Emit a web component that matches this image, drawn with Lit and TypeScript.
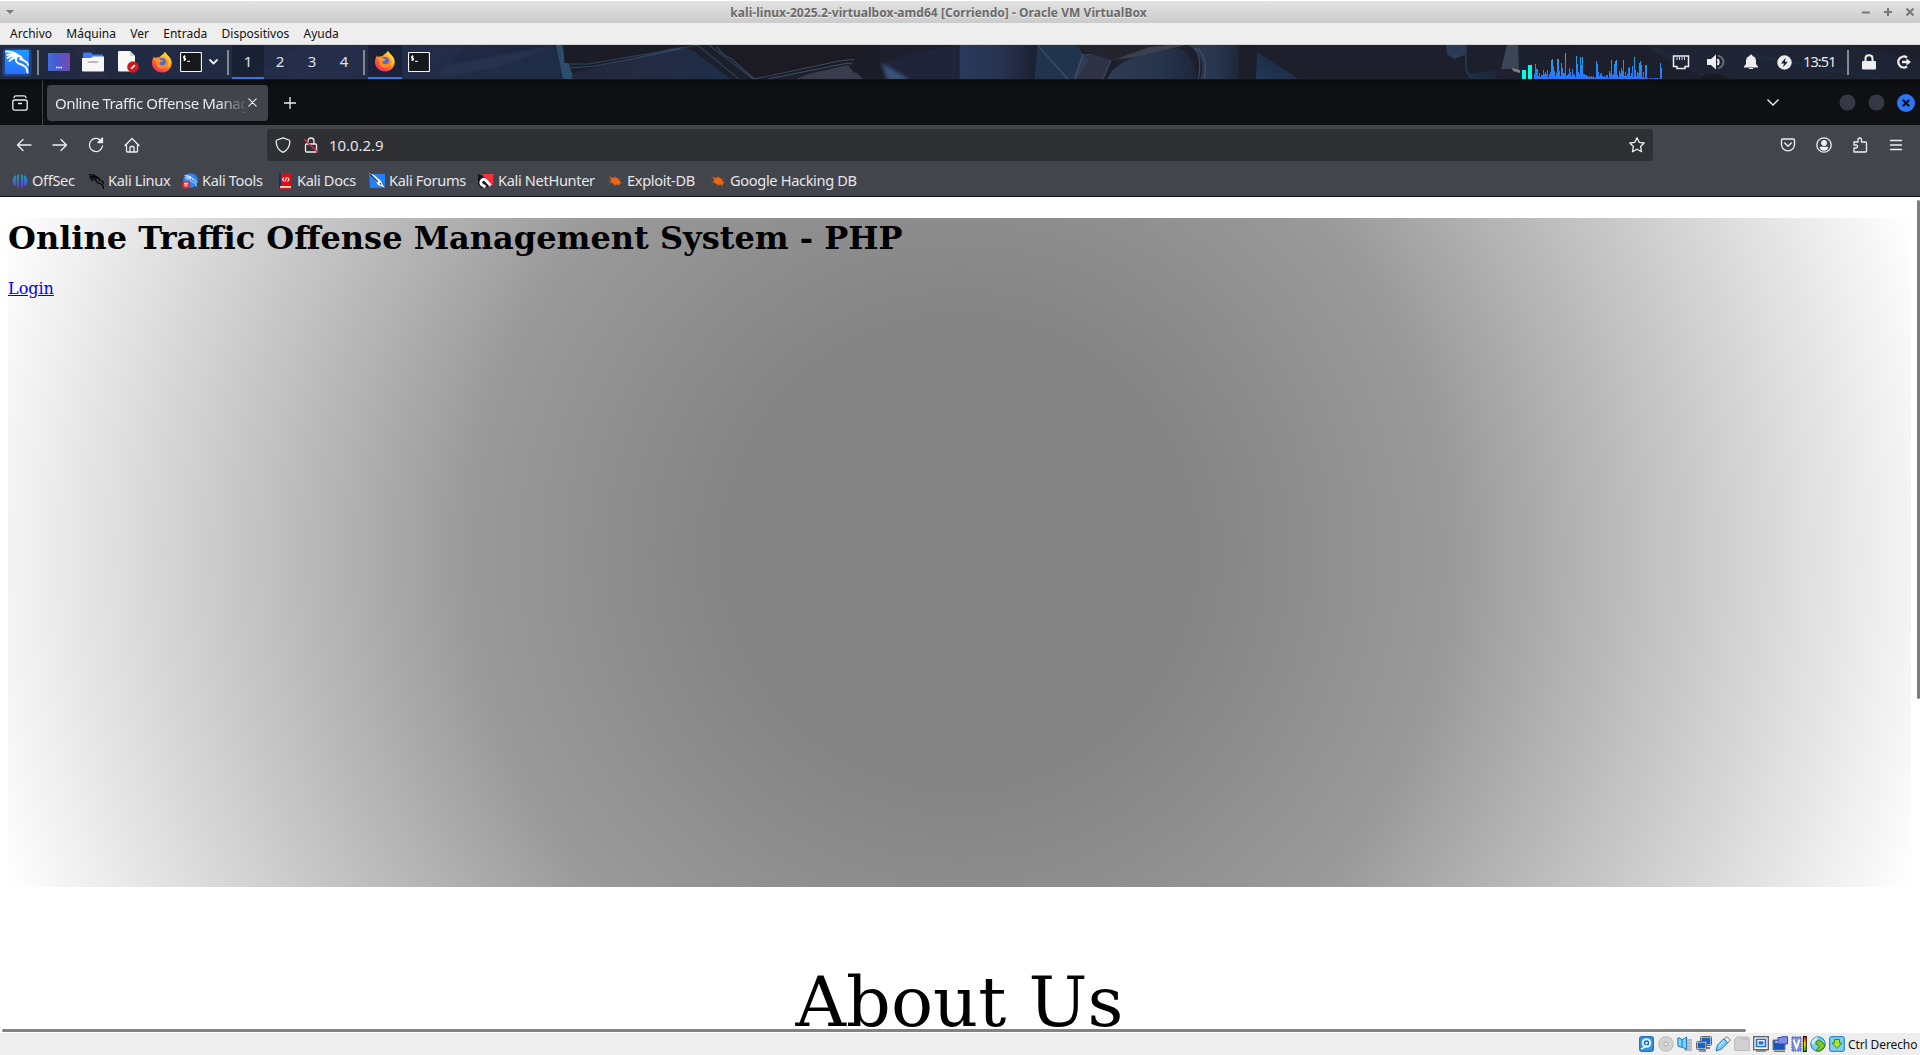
import { LitElement, html, css, svg } from "lit";
import { customElement } from "lit/decorators.js";

const stroke = (w: number, h: number, body: unknown) => html`<svg class="line" width=${w} height=${h} viewBox="0 0 ${w} ${h}">${body}</svg>`;
const pic = (w: number, h: number, body: unknown) => html`<svg width=${w} height=${h} viewBox="0 0 ${w} ${h}">${body}</svg>`;

const dragon = svg`
  <path d="M2 2.500Q9 2.500 13.500 6Q8 4.500 3 5.800M3.500 9Q7 6 13 6.500M5.500 12Q8 8.500 13 8M13 6Q17 7 18.500 10.500M12.500 8Q10.500 12.500 14.500 14.500Q18 15.500 21 17.500Q23.500 19.500 23.500 23.500M16 10Q20 11 23 13.500L24 16"
    fill="none" stroke="currentColor" stroke-width="1.900" stroke-linecap="round" stroke-linejoin="round"/>`;

const kaliLogo = pic(33, 34, svg`
  <rect x="2.500" y="3.500" width="29" height="28" rx="4" fill="#2777ff" opacity=".35"/>
  <rect x="5" y="5" width="24" height="24" rx="1" fill="url(#kl)"/>
  <defs><linearGradient id="kl" x1="0" y1="0" x2="0" y2="1"><stop offset="0" stop-color="#1f9bff"/><stop offset="1" stop-color="#2a6cff"/></linearGradient></defs>
  <g transform="translate(4 4)" color="#fff">${dragon}</g>`);

const firefox = pic(22, 22, svg`
  <defs>
    <linearGradient id="ff" x1=".8" y1="0" x2=".2" y2="1"><stop offset="0" stop-color="#ffe14a"/><stop offset=".4" stop-color="#ff9a26"/><stop offset=".75" stop-color="#ff4a3d"/><stop offset="1" stop-color="#e5257f"/></linearGradient>
  </defs>
  <path d="M14 1C15.500 3 16.500 4 17 5C18 5 20 7.500 20.700 10.500C21.500 16 17.500 21.500 11.500 21.500C5 21.500 .8 17 1 11.500C1.200 9 2.300 6.300 3 5.500L4 7C5.500 6 7 6 8 6.500C9.500 4.500 12 3.500 14 1Z" fill="url(#ff)"/>
  <circle cx="11" cy="12" r="4.900" fill="#4a6be0"/>
  <path d="M2.500 8.500C5 6.500 8 7.500 9.500 9L12 9.500C11.500 11 9 11 8.800 12C9 14 12 14.500 14 13C15.500 11 15 9 13.500 7.500C16 8 18 11 16.500 14.500C14.500 18.500 8.500 18.800 6 15.500C4.800 13.500 5 11 5.500 10Z" fill="#ff8a24"/>
  <circle cx="11.500" cy="11.300" r="3" fill="#4a6be0"/><path d="M4 8Q7.500 6.500 9.500 9L12 9.500Q11.500 11 9 11L7 12Z" fill="#ff9a2a"/>
  <path d="M14 1C13 4 15 6 16.500 8C18.500 11 18 15 15.500 17C19 15.500 20.500 11 19 7.500C18 5 15 3.500 14 1Z" fill="#ffd23c"/>`);

const terminal = pic(22, 20, svg`
  <rect x=".5" y=".5" width="21" height="19" rx="1" fill="#171819" stroke="#f4f4f4" stroke-width="1.200"/>
  <path d="M5.500 4.300H3.600V6.200H5.500V8.100H3.300M4.500 3.400V9M7 9.300H10" fill="none" stroke="#fff" stroke-width="1"/>`);

const desktopIcon = pic(22, 18, svg`
  <defs><linearGradient id="dk"><stop offset="0" stop-color="#3f6fe0"/><stop offset=".45" stop-color="#4c58c8"/><stop offset="1" stop-color="#7a48b4"/></linearGradient></defs>
  <rect width="22" height="18" rx="1" fill="url(#dk)"/><path d="M8 14.500h1.500M10.300 14.500h1.500M12.600 14.500h1.500" stroke="#fff" stroke-width="1.500"/>`);

const folderIcon = pic(22, 20, svg`
  <path d="M1 1.500Q1 .5 2 .5H9L11 2.500H20Q21 2.500 21 3.500V9H1Z" fill="#3f7bf0"/>
  <path d="M0 6H9L11 4.500H22V18.500Q22 19.500 21 19.500H1Q0 19.500 0 18.500Z" fill="#f6f6f6"/><path d="M6.500 10H15.500" stroke="#b9b9bd" stroke-width="2" stroke-linecap="round"/>`);

const docIcon = pic(21, 22, svg`
  <path d="M1 0H12L17 5V20.500H1Q0 20.500 0 19.500V1Q0 0 1 0Z" fill="#f8f8f8"/><path d="M12 0L17 5H12Z" fill="#cfcfcf"/>
  <circle cx="15" cy="16" r="5.800" fill="#d2191c"/><path d="M12.700 18.300L13.200 16.600L16.300 13.500L17.500 14.700L14.400 17.800Z" fill="#fff"/>`);

const chevron = stroke(9, 8, svg`<path d="M1 2L4.500 5.500L8 2" stroke-width="1.800"/>`);

const cpu = [5, 15, 10, 10, 3, 6, 2, 4, 4, 9, 5, 7, 5, 9, 2, 5, 7, 19, 20, 13, 8, 3, 6, 20, 20, 8, 3, 16, 11, 6, 6, 26, 3, 4, 5, 11, 7, 3, 10, 5, 4, 2, 23, 15, 7, 5, 22, 14, 22, 5, 5, 4, 4, 3, 2, 3, 2, 3, 2, 3, 1, 2, 18, 15, 7, 3, 5, 6, 3, 2, 3, 2, 4, 4, 1, 8, 6, 19, 4, 5, 15, 18, 19, 4, 2, 8, 6, 11, 8, 19, 3, 7, 3, 5, 11, 12, 3, 6, 13, 2, 22, 9, 3, 7, 6, 16, 18, 14, 2, 7, 1, 14, 14, 1, 0, 1, 1, 0, 1, 0, 1, 1, 1, 1, 0, 1, 16, 11];
const monitor = pic(140, 34, svg`
  <defs><linearGradient id="cg" gradientUnits="userSpaceOnUse" x1="0" y1="34" x2="0" y2="8"><stop offset="0" stop-color="#2a70ff"/><stop offset="1" stop-color="#16b4dc"/></linearGradient></defs>
  <rect x="0" y="25" width="4" height="9" fill="#00ffe0"/><rect x="6" y="20" width="4" height="14" fill="#00ffe0"/>
  ${cpu.map((h, i) => svg`<rect x=${12 + i} y=${34 - h} width="1" height=${h} fill="url(#cg)"/>`)}`);

const wallpaper = svg`
  <defs>
    <linearGradient id="wa"><stop offset="0" stop-color="#20293f"/><stop offset=".6" stop-color="#222c46"/><stop offset="1" stop-color="#1d2740"/></linearGradient>
    <linearGradient id="wb" x1="0" y1="0" x2="1" y2=".1"><stop offset="0" stop-color="#20263a"/><stop offset=".5" stop-color="#242b42"/><stop offset="1" stop-color="#1e2d48"/></linearGradient>
    <linearGradient id="wc"><stop offset="0" stop-color="#283a5c"/><stop offset=".5" stop-color="#293350"/><stop offset="1" stop-color="#1b2032"/></linearGradient>
    <linearGradient id="wd"><stop offset="0" stop-color="#313b52"/><stop offset=".6" stop-color="#26344d"/><stop offset="1" stop-color="#1e2538"/></linearGradient>
    <linearGradient id="we"><stop offset="0" stop-color="#1d3049"/><stop offset=".3" stop-color="#1d2132"/><stop offset="1" stop-color="#1b1d28"/></linearGradient>
    <linearGradient id="wf" x1="0" y1="1" x2="1" y2="0"><stop offset="0" stop-color="#20385a"/><stop offset="1" stop-color="#1d2538"/></linearGradient>
    <filter id="soft"><feGaussianBlur stdDeviation="1.500"/></filter>
  </defs>
  <rect width="1920" height="35" fill="#1d202c"/>
  <rect width="565" height="35" fill="url(#wa)"/>
  <g filter="url(#soft)">
    <path d="M70 0L85 20L78 35H110L95 0Z" fill="#2b2c44" opacity=".6"/>
    <path d="M300 0L250 35H440L465 0Z" fill="#28324e" opacity=".4"/>
  </g>
  <g transform="translate(440) scale(1.4157 1) translate(-440)">
    <g filter="url(#soft)">
      <path d="M430 26Q485 8 526 0V35H430Z" fill="#1f2b45" opacity=".9"/>
      <path d="M440 22Q470 12 520 2L480 22L440 32Z" fill="#2c3552" opacity=".7"/>
    </g>
    <path d="M522 0L527 35H535L526 0Z" fill="#2c4d6c"/>
    <path d="M527 0H620L590 10L545 20L528 18Z" fill="#1b1c25"/>
    <path d="M533 32Q534 27 540 26L604 3Q612 1 618 5L646 35H534Z" fill="url(#wb)"/>
    <path d="M528 19L545 19L622 0M531 23L550 21L610 4M622 0L652 35M630 0L662 35" stroke="#3c6080" stroke-width=".8" fill="none" opacity=".6"/>
    <path d="M636 0H738L736 15L664 34L648 16Z" fill="#1c1b24"/>
    <path d="M636 2Q638 9 646 14L662 34L722 16L736 14L740 0M672 34L728 18L740 22" stroke="#54708a" stroke-width=".8" fill="none" opacity=".6"/>
    <path d="M700 29L728 20L732 27L748 35H690Z" fill="#474c5e" opacity=".65"/>
    <path d="M738 0H752L750 18L760 35H740L730 22Z" fill="#1a1c28"/>
    <path d="M752 18Q775 6 806 0V35H756Z" fill="#20243a"/>
    <g filter="url(#soft)"><path d="M752 18L772 35H756Z" fill="#37547a"/></g>
    <path d="M807 0H862L860 35H807Z" fill="url(#wc)"/>
    <path d="M862 0H890L898 17L888 35H860Z" fill="#22334e"/>
    <path d="M862 0L884 35M894 10L905 9L914 15L908 35H888Z" fill="#41475e" stroke="#52708f" opacity=".5"/>
    <path d="M888 0H970L950 5L920 18L900 9Z" fill="#24242f"/>
  </g>
  <path d="M1112 26Q1130 8 1178 3Q1192 6 1198 35H1106Z" fill="url(#wd)"/>
  <path d="M1116 14L1150 2L1170 0H1186L1130 13Z" fill="#4d5464" opacity=".6"/>
  <path d="M1192 0H1240V35H1200Q1208 12 1188 0Z" fill="url(#wd)"/>
  <path d="M1195 3Q1203 15 1198 35M1198 3Q1209 15 1204 35" stroke="#50627c" fill="none" opacity=".7"/>
  <path d="M1240 0H1257V35H1238Z" fill="#1b1d29"/><path d="M1257 7L1300 35H1256Z" fill="url(#wf)"/>
  <path d="M1446 0H1467V9L1454 14L1447 9Z" fill="#2b3d56"/><path d="M1466 0V25L1472 35" stroke="#22374c" stroke-width="2" fill="none"/>
  <path d="M1470 29L1502 24L1507 0H1580L1548 35H1470Z" fill="url(#we)"/>
  <path d="M1507 0H1518L1519 24L1501 24Z" fill="#3c4558"/><path d="M1512 23L1520 25V28L1513 26Z" fill="#847e7b"/>
  <g filter="url(#soft)">
    <path d="M1645 0L1715 30L1740 35H1920V16L1850 0Z" fill="#1c2435" opacity=".6"/>
    <path d="M1650 2L1706 31M1750 10L1830 25L1880 32" stroke="#233a5e" stroke-width="2" fill="none" opacity=".5"/>
  </g>
  <ellipse cx="1713" cy="33" rx="12" ry="4" fill="#181a22"/>`;

const offsec = svg`<defs><linearGradient id="os" x1="0" y1="0" x2="0" y2="1"><stop offset="0" stop-color="#16a9b8"/><stop offset=".6" stop-color="#3c63cf"/><stop offset="1" stop-color="#6b37d6"/></linearGradient></defs>
  <path d="M7 1V15.500Q4.800 14 4.800 11V4Q4.800 2 7 1ZM9 1V15.500Q11.200 14 11.200 11V4Q11.200 2 9 1ZM4 2V13.500Q.5 11.500 .5 8Q.5 4 4 2ZM12 2V13.500Q15.500 11.500 15.500 8Q15.500 4 12 2Z" fill="url(#os)"/>`;
const bug = svg`<path d="M2.500 4L6 5L7.500 4L10 5L12 6.500L13 8.500L14.500 10L13 10.500L12.500 12.500L10 11.500L8 12.500L6 10.500L3.500 9.500L4 7Z" fill="#f0650f"/>
  <path d="M1 8.500H4M8 2.500L9 5M12 6L15 5M1.500 12L5 9.500M6 13L8 11M.8 2.500L4 4.500M12 13L11 11" stroke="#9a5630" stroke-width=".7"/>`;
const marks: [string, unknown][] = [
  ["OffSec", offsec],
  ["Kali Linux", svg`<g color="#050507" transform="scale(.66)">${dragon}</g>`],
  ["Kali Tools", svg`<circle cx="8.500" cy="7.500" r="7.300" fill="#2b82fb"/><g color="#cfe4ff" transform="translate(2 1) scale(.52)">${dragon}</g><circle cx="4" cy="11.700" r="3.900" fill="#e2282e"/><path d="M2 10.300H6M3.200 10.300V13.500M5 10.300V13.500" stroke="#fff" fill="none"/>`],
  ["Kali Docs", svg`<path d="M3 0H14V13H3Z" fill="#d90d14"/><path d="M2 0H4V15H2Z" fill="#202a66"/><path d="M3 13H14V15.500H3Z" fill="#e6d8cf"/><path d="M3 15.300H14" stroke="#d90d14"/><path d="M7 4.500L5.500 6.500L7 8.500M10.500 4.500L12 6.500L10.500 8.500M9.500 4.500L8 8.500" stroke="#fff" fill="none" stroke-width="1.100"/>`],
  ["Kali Forums", svg`<path d="M0 1H16V13L12 15H1Z" fill="#2380fb"/><path d="M0 0L5 2L12 8L13.500 11.500L16 15L12 13L9 12L6.500 7.500Z" fill="#fff"/><path d="M1 1L9 9M11 10L12 11.500" stroke="#222b3d" stroke-width="1.200"/>`],
  ["Kali NetHunter", svg`<path d="M4 1H15.500L15 12L11 14Z" fill="#f4303c"/><path d="M0 1L5 3L12 11L10 14L3 15L0 11Z" fill="#15161b"/><path d="M12.500 12.500L8 7.500Q5.500 5 3.500 7.500Q1.500 10.500 5 12.500L7.500 14" fill="none" stroke="#fff" stroke-width="2.800"/>`],
  ["Exploit-DB", bug],
  ["Google Hacking DB", bug],
];

const statusIcons = [
  svg`<rect x=".7" y=".7" width="13.600" height="14.600" rx="1.500" fill="#3a93e0" stroke="#0a5cab"/><circle cx="7.500" cy="7" r="4.800" fill="#d9f0ff"/><circle cx="7.500" cy="7" r="2" fill="none" stroke="#1263b8" stroke-width="1.300"/><path d="M8 9Q5 12 2 13" stroke="#eef9ff" stroke-width="1.500" fill="none"/>`,
  svg`<circle cx="8" cy="8" r="7.200" fill="#d2d2d2" stroke="#b8b8b8"/><circle cx="8" cy="8" r="2" fill="#eee" stroke="#aaa"/>`,
  svg`<path d="M10 3H15V15H7Z" fill="#b7b7b7"/><path d="M10 6H15M10 9H15M10 12H15" stroke="#ccc"/><path d="M.8 2H3L5 4L9.500 1V13.500L5 11H3L1 10Z" fill="#7fd3fb" stroke="#1578c0"/><path d="M5 4V11" stroke="#1578c0"/>`,
  svg`<rect x="5" y="1" width="10" height="8" fill="#1b62c4" stroke="#fff"/><rect x="4.500" y=".5" width="11" height="9" rx="1" fill="none" stroke="#666"/><path d="M8 12H14" stroke="#777" stroke-width="2"/><rect x="1" y="6" width="9" height="7" fill="#1b62c4" stroke="#fff"/><rect x=".5" y="5.500" width="10" height="8" rx="1" fill="none" stroke="#666"/><path d="M3 15H10" stroke="#777" stroke-width="1.500"/>`,
  svg`<path d="M9 3L12 .6L15.300 4L12.500 7Z" fill="#ededed" stroke="#777"/><path d="M1 15L2.500 9L8.500 3Q11 4 12.500 7L6.500 13Z" fill="#83cbf7" stroke="#1c75bb"/><path d="M4 10L9 5" stroke="#b5e2ff" stroke-width="1.500"/>`,
  svg`<path d="M.7 3.500L3 1H14L15.300 3V14.500H.7Z" fill="#d0d0d0" stroke="#bcbcbc"/><path d="M7 3H15" stroke="#b1b1b1"/>`,
  svg`<rect x=".7" y=".7" width="14.600" height="13" fill="#f8f8f8" stroke="#666" stroke-width="1.400"/><rect x="2.700" y="2.700" width="10.600" height="8.600" fill="#1b70d0"/><rect x="5" y="4.700" width="6" height="4.500" fill="none" stroke="#fff" stroke-width="1.200"/><path d="M3 15H13" stroke="#777" stroke-width="1.500"/>`,
  svg`<path d="M1 4H13V14H1Z" fill="#1558b8" stroke="#777"/><path d="M2 15.500H13" stroke="#777"/><path d="M6 1.500H9L10 .7H15.500V8H6Z" fill="#7f8ceb" stroke="#3c47b2"/><path d="M3 6H6" stroke="#fff"/>`,
  svg`<path d="M1 1H10V15H1Z" fill="#7f8fe0" stroke="#3346a0" stroke-dasharray="1.500 1"/><path d="M2.500 3.500L5.500 12L8.500 3.500" fill="none" stroke="#fff" stroke-width="2"/><defs><linearGradient id="hb" x1="0" y1="0" x2="0" y2="1"><stop offset="0" stop-color="#f20d0d"/><stop offset=".5" stop-color="#ffe000"/><stop offset="1" stop-color="#1ab81a"/></linearGradient></defs><rect x="12.300" y=".5" width="3" height="15" fill="url(#hb)" stroke="#111"/>`,
  svg`<circle cx="8" cy="8" r="7.200" fill="#7fcaf1" stroke="#1b75bd"/><path d="M1 6Q4 1 8 1Q7 5 3 9Z" fill="#c8edff"/><path d="M6 5.500L9.500 4L14.500 8.500V11L9.500 15.300L6 14.500L9.500 10.500L6 8Z" fill="#75cb24" stroke="#397f12"/>`,
  svg`<rect x=".7" y=".7" width="14.600" height="14.600" rx="1.500" fill="#7fcdf5" stroke="#1876bb"/><path d="M5.500 3.500H10.500V7H13L8 12.500L3 7H5.500Z" fill="#a3e52f" stroke="#3f8a10"/>`,
];

@customElement("app-root")
export class AppRoot extends LitElement {
  static styles = css`
    :host { display: block; width: 1920px; height: 1055px; overflow: hidden; background: #fff; font-family: "Noto Sans", sans-serif; }
    * { box-sizing: border-box; }
    svg { display: block; flex: none; }
    .line { fill: none; stroke: #eeeef0; stroke-width: 1.3; stroke-linecap: round; stroke-linejoin: round; }
    .root { display: flex; flex-direction: column; height: 1055px; }
    .title { height: 23px; flex: none; border-top: 1px solid #fff; background: linear-gradient(#e3e3e3, #cbcbcb); display: grid; grid-template-columns: 1fr auto 1fr; align-items: center; color: #6a6a6a; padding-left: 5px; padding-right: 5px; }
    .title b { font-size: 12px; line-height: 24px; height: 22px; letter-spacing: .04px; text-shadow: 0 1px 0 #eee; white-space: nowrap; margin-left: -43px; }
    .wm { display: flex; justify-content: flex-end; gap: 12px; }
    .menu { height: 22px; flex: none; background: #eee; border-bottom: 1px solid #d4d4d4; display: flex; gap: 14.3px; padding-left: 10px; font-size: 12px; line-height: 21px; color: #111; }
    .panel { height: 35px; flex: none; position: relative; overflow: hidden; display: flex; border-bottom: 1px solid #12151c; }
    .wall { position: absolute; inset: 0; }
    .front { position: relative; display: flex; flex: 1; align-items: stretch; color: #eee; }
    .cell { display: flex; align-items: center; justify-content: center; }
    .w33 { width: 33px; } .w34 { width: 34px; } .w36 { width: 36px; } .w31 { width: 31px; } .w28 { width: 28px; } .w17 { width: 17px; } .w38 { width: 38px; } .w32 { width: 32px; } .w29 { width: 29px; }
    .sep { width: 2px; height: 25px; margin: 5px 3px 0 4px; background: #84888e; }
    .sep.b { margin-left: 5px; } .sep.c { margin-left: 3px; } .sep.d { margin-left: 10px; margin-right: 1px; }
    .ws { width: 32px; text-align: center; font-size: 15px; line-height: 33px; color: #dfe2e8; }
    .on { border-bottom: 2px solid #2a76f5; background: rgba(20, 24, 38, .5); }
    .grow { flex: 1; }
    .clock { width: 38px; padding-left: 4px; font-size: 14.500px; line-height: 33px; letter-spacing: -.9px; white-space: nowrap; color: #e8eaee; }
    .tabs { height: 45px; flex: none; background: linear-gradient(#0b0c0f, #0e1013 6px); display: flex; align-items: center; }
    .recent { width: 43px; height: 45px; border-right: 1px solid #3c3e43; padding-right: 2px; display: flex; align-items: center; justify-content: center; margin-right: 4px; }
    .tab { width: 221px; height: 36px; border-radius: 4px; background: #42444b; display: flex; align-items: center; padding: 0 11px 0 8px; font-size: 15px; color: #e8e8eb; margin-right: 16px; }
    .label { width: 193px; flex: none; white-space: nowrap; letter-spacing: -.42px; mask-image: linear-gradient(90deg, #000 163px, transparent 193px); }
    .ctl { display: flex; align-items: center; gap: 12px; padding-right: 4px; }
    .max { margin-right: -1px; }
    .nav { height: 40px; flex: none; background: #43454c; display: flex; align-items: center; }
    .btns { width: 267px; display: flex; padding-left: 6px; }
    .url { width: 1386px; height: 32px; border-radius: 4px; background: #2f3034; display: flex; align-items: center; padding: 0 8px; color: #e4e4e8; font-size: 15px; }
    .addr { margin-left: 10px; letter-spacing: -.05px; flex: 1; }
    .lock { margin-left: 12px; }
    .tools { flex: 1; display: flex; justify-content: flex-end; padding-right: 6px; }
    .marks { height: 32px; flex: none; background: #43454c; border-bottom: 1px solid #111216; display: grid; grid-template-columns: 76px 94px 95px 92px 109px 129px 103px 160px; padding-left: 12px; color: #e6e6ea; font-size: 14.600px; }
    .mark { display: flex; align-items: center; gap: 4px; white-space: nowrap; letter-spacing: -.34px; line-height: 31px; }
    .page { flex: 1; position: relative; overflow: hidden; padding: 21px 9px 0 8px; font-family: "DejaVu Serif", serif; color: #000; }
    .hero { height: 669px; padding-top: 1px; background: radial-gradient(circle, rgba(0, 0, 0, .485) 22%, rgba(0, 0, 0, .395) 49%, rgba(0, 0, 0, 0) 100%); }
    h1 { margin: 0; font-size: 32px; line-height: 38px; }
    .login { margin-top: 21px; font-size: 16px; line-height: 22px; }
    .login a { color: #0000ee; text-decoration: underline; }
    .about { text-align: center; font-size: 70px; line-height: 72px; margin-top: 79px; white-space: nowrap; }
    .vbar { position: absolute; right: 0; top: 3px; width: 3px; height: 499px; background: #7c7d7e; border-radius: 2px; }
    .hbar { position: absolute; left: 2px; bottom: 1px; width: 1744px; height: 3px; background: #7f8482; border-radius: 2px; }
    .status { height: 22px; flex: none; background: #eee; display: flex; align-items: center; justify-content: flex-end; gap: 3px; padding-right: 1px; font-size: 12px; color: #111; }
    .host { width: 71px; white-space: nowrap; letter-spacing: -.1px; }
  `;

  render() {
    return html`<div class="root">
      <div class="title">
        ${pic(10, 6, svg`<path d="M1 1H9L5 5Z" fill="#777"/>`)}
        <b>kali-linux-2025.2-virtualbox-amd64 [Corriendo] - Oracle VM VirtualBox</b>
        <div class="wm">
          ${pic(10, 10, svg`<path d="M1 5.500H9" stroke="#777" stroke-width="2"/>`)}
          ${pic(10, 10, svg`<path d="M1 5H9M5 1V9" stroke="#777" stroke-width="2"/>`)}
          ${pic(10, 10, svg`<path d="M1.500 1.500L8.500 8.500M8.500 1.500L1.500 8.500" stroke="#777" stroke-width="2"/>`)}
        </div>
      </div>
      <div class="menu">${["Archivo", "Máquina", "Ver", "Entrada", "Dispositivos", "Ayuda"].map((t) => html`<span>${t}</span>`)}</div>
      <div class="panel">
        <svg class="wall" width="1920" height="35" viewBox="0 0 1920 35">${wallpaper}</svg>
        <div class="front">
          <div class="cell w33">${kaliLogo}</div><i class="sep"></i>
          <div class="cell w34">${desktopIcon}</div><div class="cell w34">${folderIcon}</div><div class="cell w36">${docIcon}</div>
          <div class="cell w31">${firefox}</div><div class="cell w28">${terminal}</div><div class="cell w17">${chevron}</div>
          <i class="sep b"></i>
          ${[1, 2, 3, 4].map((n) => html`<div class="ws ${n === 1 ? "on" : ""}">${n}</div>`)}
          <i class="sep c"></i>
          <div class="cell w34 on">${firefox}</div><div class="cell w34">${terminal}</div>
          <div class="grow"></div>
          ${monitor}
          <div class="cell w38">${pic(18, 16, svg`<path d="M1.500 2H16.500V12.500H13V14.500H5V12.500H1.500Z" fill="none" stroke="#eee" stroke-width="1.500"/><path d="M5 3V6M7.500 3V6M10 3V6M12.500 3V6" stroke="#ddd"/>`)}</div>
          <div class="cell w32">${pic(18, 16, svg`<path d="M0 5H4L9 .5V15.500L4 11H0Z" fill="#eee"/><path d="M10.500 5Q12.800 8 10.500 11" fill="none" stroke="#eee" stroke-width="2"/><path d="M11 1.500Q16.500 3.500 16.500 8Q16.500 12.500 11 14.500" fill="none" stroke="#70757d" stroke-width="1.700"/>`)}</div>
          <div class="cell w38">${pic(14, 16, svg`<path d="M7 .5Q8.500 .5 8.500 2Q12 3 12 7V10L14 12.500V13.500H0V12.500L2 10V7Q2 3 5.500 2Q5.500 .5 7 .5Z" fill="#eee"/><path d="M5 14.500H9" stroke="#eee"/>`)}</div>
          <div class="cell w29">${pic(15, 15, svg`<circle cx="7.500" cy="7.500" r="7.200" fill="#eee"/><path d="M8.500 2.800L4 8.500H7L6 12.300L11 6.800H8Z" fill="#1c2230"/>`)}</div>
          <div class="clock">13:51</div><i class="sep d"></i>
          <div class="cell w38">${pic(14, 16, svg`<path d="M3.500 7.500V4.500Q3.500 1.300 7 1.300Q10.500 1.300 10.500 4.500V7.500" stroke="#eee" stroke-width="2" fill="none"/><rect y="7" width="14" height="8.500" rx="1" fill="#eee"/>`)}</div>
          <div class="cell w32">${pic(14, 14, svg`<path d="M10 2.500A5.500 5.500 0 1 0 10 11.500" fill="none" stroke="#eee" stroke-width="2.300"/><path d="M5 7H10" stroke="#eee" stroke-width="2.400"/><path d="M9.500 3.500L14 7L9.500 10.500Z" fill="#eee"/>`)}</div>
        </div>
      </div>
      <div class="tabs">
        <div class="recent">${stroke(16, 16, svg`<rect x=".8" y="5" width="14.400" height="10.200" rx="2"/><path d="M2 2.500Q2.300 .8 4 .8H12Q13.700 .8 14 2.500M6.500 8.500H9.500"/>`)}</div>
        <div class="tab"><span class="label">Online Traffic Offense Manag</span>${stroke(9, 9, svg`<path d="M.8 .8L8.200 8.200M8.200 .8L.8 8.200" stroke-width="1.100"/>`)}</div>
        ${stroke(12, 12, svg`<path d="M6 .5V11.500M.5 6H11.500"/>`)}
        <div class="grow"></div>
        <div class="ctl">
          ${pic(67, 10, svg`<path d="M7.500 1.500L13 7L18.500 1.500" fill="none" stroke="#f2f2f4" stroke-width="1.400"/>`)}
          ${pic(17, 17, svg`<circle cx="8.500" cy="8.500" r="8" fill="#353946"/>`)}
          <span class="max">${pic(17, 17, svg`<circle cx="8.500" cy="8.500" r="8" fill="#353946"/>`)}</span>
          ${pic(20, 20, svg`<circle cx="10" cy="10" r="9" fill="#2a76f5"/><path d="M6.800 6.800L13.200 13.200M13.200 6.800L6.800 13.200" stroke="#0b1120" stroke-width="2.200"/>`)}
        </div>
      </div>
      <div class="nav">
        <div class="btns">
          <div class="cell w36">${stroke(16, 16, svg`<path d="M15 8H1.500M7 2.500L1.500 8L7 13.500"/>`)}</div>
          <div class="cell w36">${stroke(16, 16, svg`<path d="M1 8H14.500M9 2.500L14.500 8L9 13.500"/>`)}</div>
          <div class="cell w36">${stroke(16, 16, svg`<path d="M14.500 9A6.600 6.600 0 1 1 12.500 3.200L14.500 5"/><path d="M14.500 1V5.500H10Z" fill="#f2f2f4"/>`)}</div>
          <div class="cell w36">${stroke(16, 16, svg`<path d="M1 8.500L8 1.500L15 8.500M2.500 7.500V14Q2.500 15 3.500 15H12.500Q13.500 15 13.500 14V7.500M6 15V10.500Q6 9.500 7 9.500H9Q10 9.500 10 10.500V15"/>`)}</div>
        </div>
        <div class="url">
          ${stroke(16, 16, svg`<path d="M8 .8L14 3Q14.800 3.300 14.800 4Q15 12 8 15.300Q1 12 1.200 4Q1.200 3.300 2 3Z"/>`)}
          <span class="lock">${stroke(16, 16, svg`<path d="M5 7V4.500Q5 1 8 1Q11 1 11 4.500V7M3.500 7H12.500Q13.500 7 13.500 8V14Q13.500 15 12.500 15H3.500Q2.500 15 2.500 14V8Q2.500 7 3.500 7Z"/><path d="M1.500 2.500L14.500 15" stroke="#e22850" stroke-width="1.500"/>`)}</span>
          <span class="addr">10.0.2.9</span>
          ${stroke(16, 16, svg`<path d="M8 .8L10.200 5.300L15.200 6L11.600 9.500L12.500 14.700L8 12.200L3.500 14.700L4.400 9.500L.8 6L5.800 5.300Z"/>`)}
        </div>
        <div class="tools">
          <div class="cell w36">${stroke(16, 16, svg`<path d="M2.500 2H13.500Q14.500 2 14.500 3V7.500A6.500 6.300 0 0 1 1.500 7.500V3Q1.500 2 2.500 2ZM4.700 6L8 9.300L11.300 6"/>`)}</div>
          <div class="cell w36">${stroke(16, 16, svg`<circle cx="8" cy="8" r="7.200"/><circle cx="8" cy="6" r="2.300" fill="#f2f2f4"/><path d="M4.300 10.500H11.700Q11 13 8 13Q5 13 4.300 10.500Z" fill="#f2f2f4"/>`)}</div>
          <div class="cell w36">${stroke(16, 16, svg`<path d="M2 15V11H4Q5.500 11 5.500 9.500Q5.500 8 4 8H2V5H6V3Q6 1 7.800 1Q9.500 1 9.500 3V5H13.500Q14.500 5 14.500 6V14Q14.500 15 13.500 15Z"/>`)}</div>
          <div class="cell w36">${stroke(14, 14, svg`<path d="M1.500 2.500H12.500M1.500 7H12.500M1.500 11.500H12.500"/>`)}</div>
        </div>
      </div>
      <div class="marks">${marks.map(([t, icon]) => html`<div class="mark">${pic(16, 16, icon)}<span>${t}</span></div>`)}</div>
      <div class="page">
        <div class="hero"><h1>Online Traffic Offense Management System - PHP</h1><div class="login"><a>Login</a></div></div>
        <div class="about">About Us</div>
        <i class="vbar"></i><i class="hbar"></i>
      </div>
      <div class="status">${statusIcons.map((i) => pic(16, 16, i))}<span class="host">Ctrl Derecho</span></div>
    </div>`;
  }
}
